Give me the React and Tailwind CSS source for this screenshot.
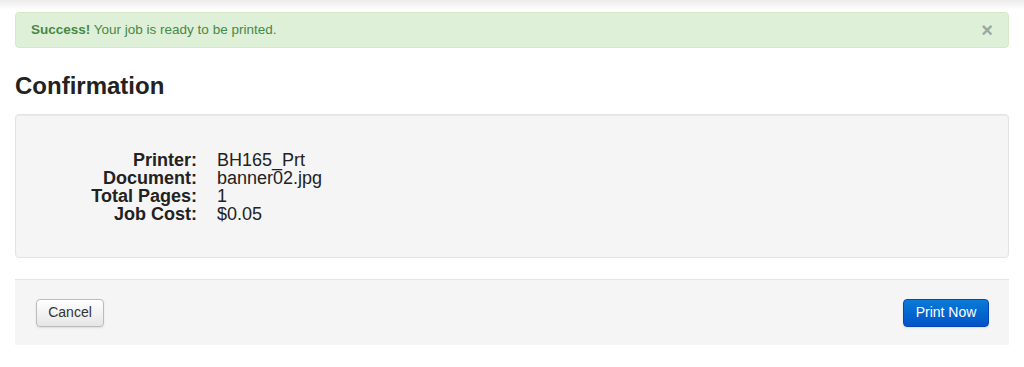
export default function App() {
  const rows = [
    ["Printer:", "BH165_Prt"],
    ["Document:", "banner02.jpg"],
    ["Total Pages:", "1"],
    ["Job Cost:", "$0.05"],
  ];

  return (
    <div className="min-h-[367px] w-[1024px] bg-white font-['Liberation_Sans',Arial,sans-serif] text-[#333]">
      <div className="h-[10px] bg-gradient-to-b from-[#ececec] to-white" />
      <div className="px-[15px]">
        {/* alert */}
        <div className="mt-[2px] flex h-[36px] items-center justify-between rounded-[4px] border border-[#d6e9c6] bg-[#dff0d8] pl-[15px] pr-[15px] text-[13.5px] text-[#468847]">
          <p>
            <strong>Success!</strong> Your job is ready to be printed.
          </p>
          <span className="text-[20px] font-bold leading-none text-[#9aa99a]">×</span>
        </div>

        <h1 className="mt-[25px] text-[24px] font-bold leading-[26px] text-[#222]">Confirmation</h1>

        {/* well */}
        <div className="mt-[15px] flex h-[144px] items-center rounded-[4px] border border-[#e3e3e3] bg-[#f5f5f5] shadow-[inset_0_1px_1px_rgba(0,0,0,0.05)]">
          <div className="grid grid-cols-[181px_auto] gap-x-[20px] pt-[2px] text-[18px] leading-[18px] text-[#222]">
            {rows.map(([k, v]) => (
              <div key={k} className="contents">
                <div className="text-right font-bold">{k}</div>
                <div>{v}</div>
              </div>
            ))}
          </div>
        </div>

        {/* footer */}
        <div className="mt-[21px] flex h-[66px] items-center justify-between border-t border-[#e5e5e5] bg-[#f5f5f5] pl-[21px] pr-[20px]">
          <button className="h-[28px] w-[68px] rounded-[4px] border border-[#bbb] bg-gradient-to-b from-white to-[#e6e6e6] text-[14px] text-[#333] shadow-[0_1px_2px_rgba(0,0,0,0.1)]">
            Cancel
          </button>
          <button className="h-[28px] w-[86px] rounded-[4px] border border-[#0547b8] bg-gradient-to-b from-[#0a7bd8] to-[#0452c6] text-[14px] text-white shadow-[0_1px_2px_rgba(0,0,0,0.1)]">
            Print Now
          </button>
        </div>
      </div>
    </div>
  );
}
